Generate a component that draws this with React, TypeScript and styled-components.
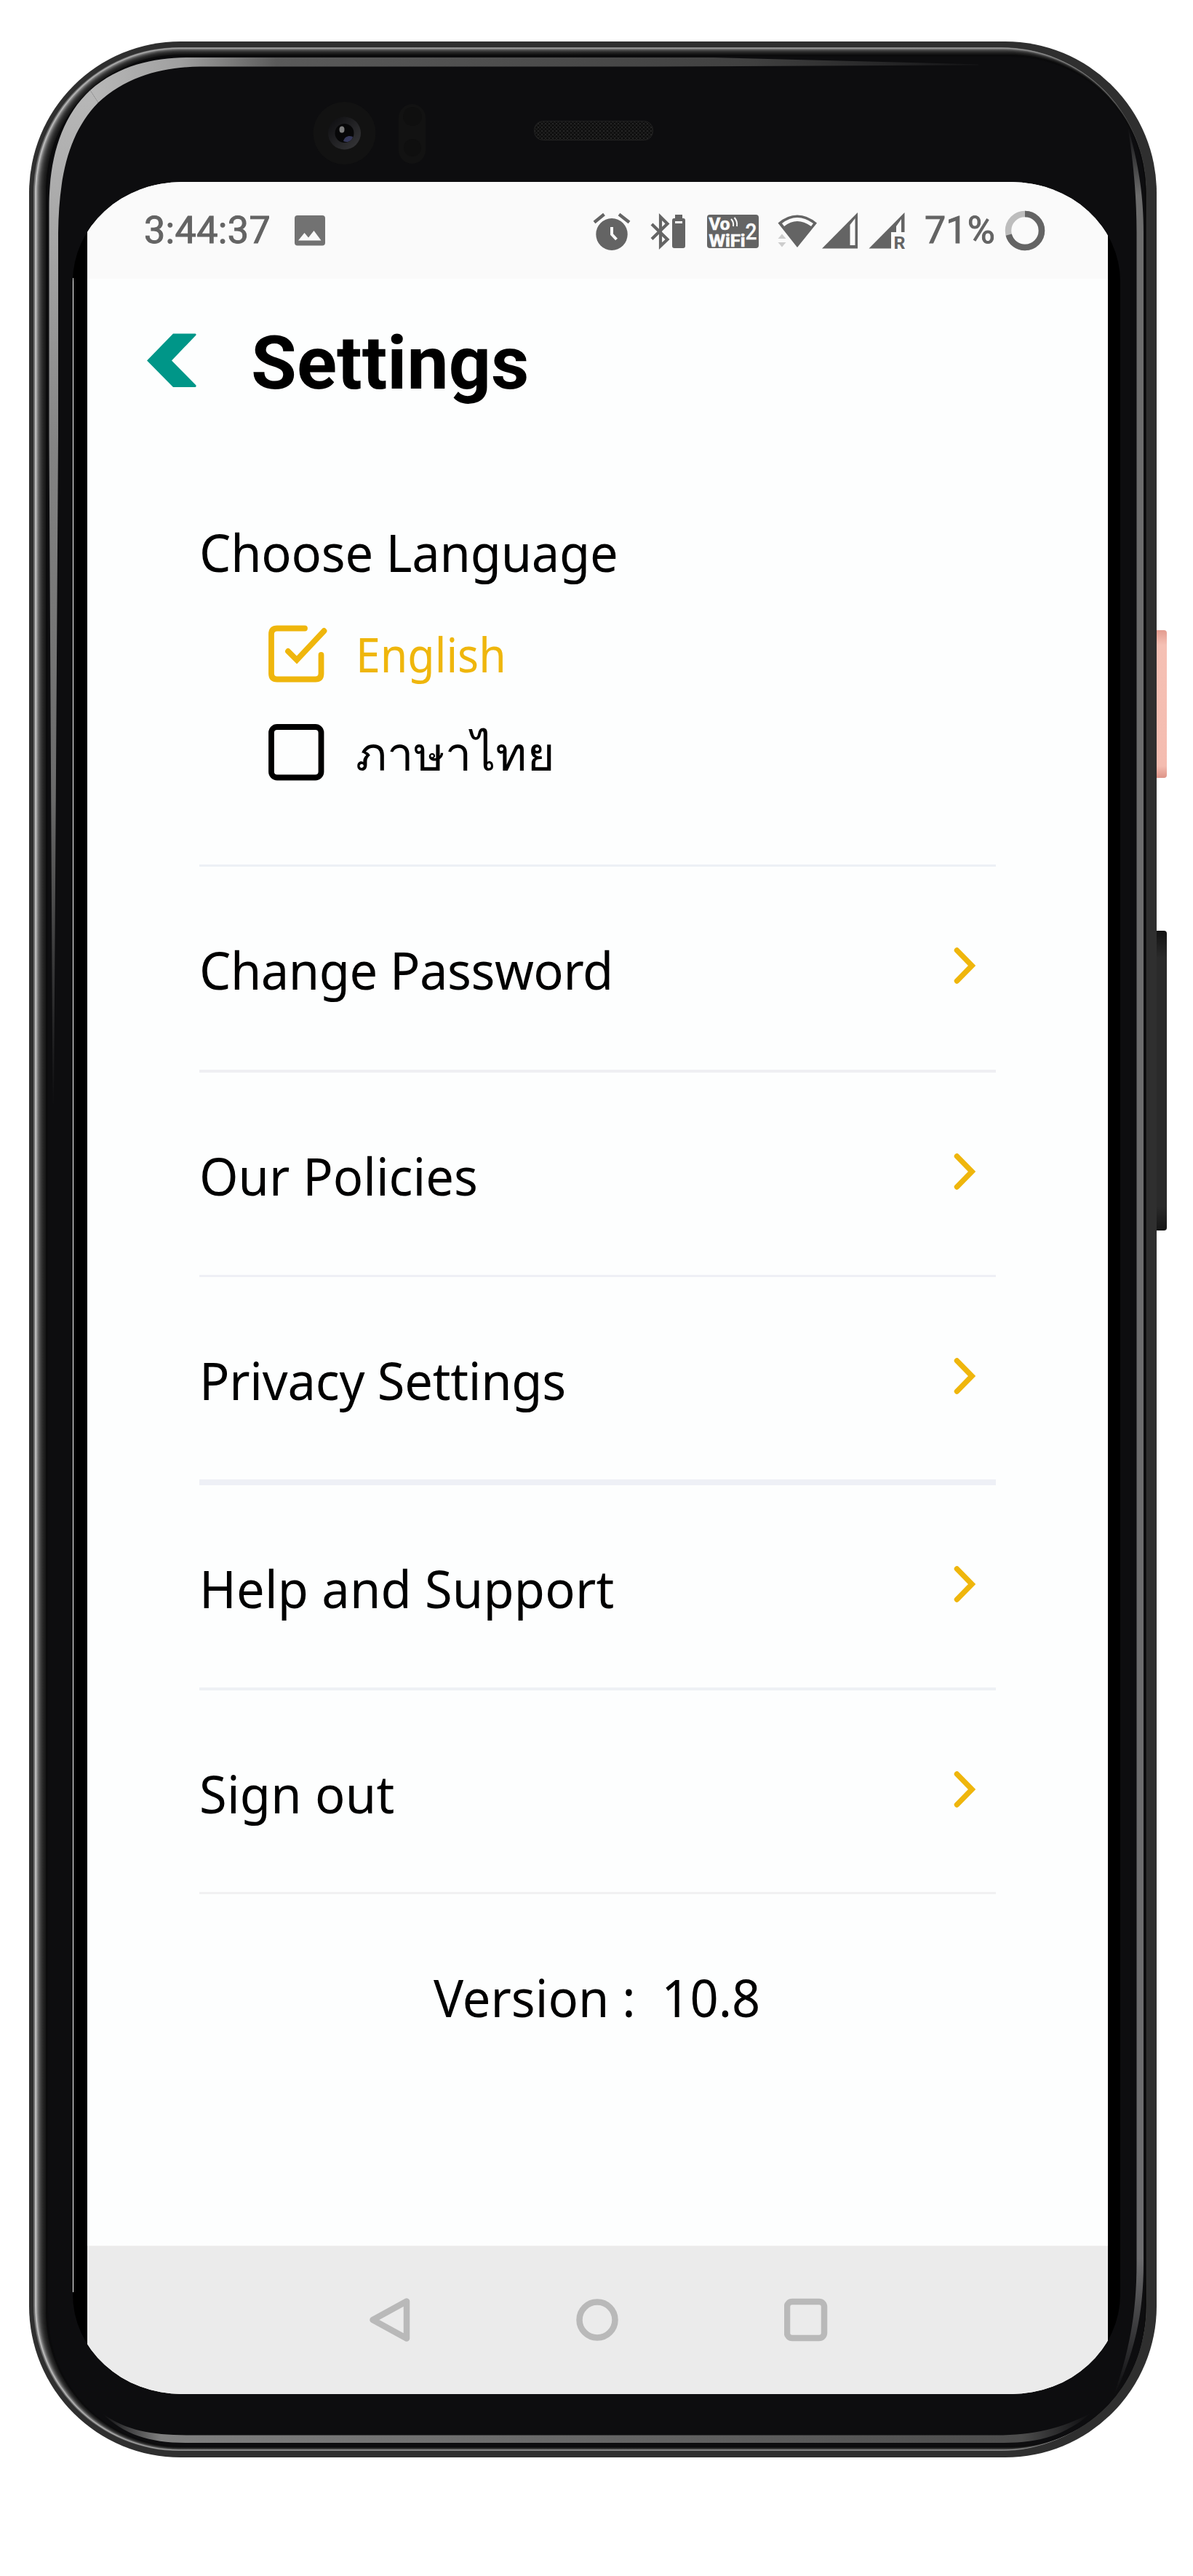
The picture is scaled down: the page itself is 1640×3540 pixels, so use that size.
import React from "react";
import styled, { createGlobalStyle } from "styled-components";

const UI_FONT = `"Noto Sans", Loma, "Open Sans", sans-serif`;
const SYSTEM_FONT = `Roboto, "Liberation Sans", sans-serif`;
const AMBER = "#efb60c";
const STATUS = "#646464";

const GlobalStyle = createGlobalStyle`
  * { box-sizing: border-box; }
  body { margin: 0; background: #ffffff; }
`;

const Stage = styled.main`
  width: 1640px;
  height: 3540px;
  padding: 57px 50px 0 40px;
  overflow: hidden;
`;

const Phone = styled.div`
  position: relative;
  width: 1550px;
  height: 3320px;
  padding: 193px 50px 87px 60px;
`;

const Chassis = styled.svg`
  position: absolute;
  left: -40px;
  top: -57px;
  width: 1640px;
  height: 3540px;
`;

const Glass = styled.div`
  position: relative;
  display: flex;
  width: 1440px;
  height: 3040px;
  padding: 0 17px 0 20px;
  overflow: hidden;
  border-radius: 150px / 137px;
  background: linear-gradient(#fff, #fff) no-repeat 0 132px / 1px 2768px, #000;
`;

const Screen = styled.div`
  display: flex;
  flex-direction: column;
  flex: 1;
  background: #fdfefe;
`;

const StatusBar = styled.header`
  display: flex;
  align-items: center;
  height: 133px;
  padding: 0 86px 0 78px;
  background: #fafafa;
  color: ${STATUS};
  font: 400 52px/60px ${SYSTEM_FONT};
`;

const Clock = styled.span<{ $tracking: number }>`
  width: 205px;
  letter-spacing: ${(p) => p.$tracking}px;
  white-space: nowrap;
  -webkit-text-stroke: 1px ${STATUS};
`;

const Battery = styled(Clock)`
  width: 135px;
  padding-left: 25px;
`;

const Glyph = styled.svg<{ $gap?: number; $push?: boolean }>`
  flex: none;
  overflow: visible;
  margin-left: ${(p) => (p.$push ? "auto" : `${p.$gap ?? 0}px`)};
`;

const TitleBar = styled.div`
  display: flex;
  align-items: flex-start;
  height: 330px;
  padding: 56px 0 0 82px;
`;

const BackIcon = styled.svg`
  margin-top: 19px;
  flex: none;
`;

const Title = styled.h1`
  margin: 0 0 0 75px;
  font: 700 102px/120px ${SYSTEM_FONT};
  letter-spacing: 0.1px;
  color: #000;
`;

const Content = styled.section`
  padding: 0 154px;
  flex: 1;
`;

const LanguageSection = styled.div`
  height: 478px;
  border-bottom: 3px solid #edf0f5;
`;

const Label = styled.span<{ $tracking: number }>`
  display: block;
  font: 400 72px/90px ${UI_FONT};
  letter-spacing: ${(p) => p.$tracking}px;
  white-space: pre;
  color: #000;
  transform: scaleX(0.953);
  transform-origin: left;
`;

const Options = styled.div`
  display: flex;
  flex-direction: column;
  gap: 45px;
  padding: 51px 0 0 91px;
`;

const Option = styled.label<{ $active?: boolean }>`
  display: flex;
  align-items: center;
  height: 90px;
  gap: 38px;
  color: ${(p) => (p.$active ? AMBER : "#000")};
`;

const OptionText = styled.span<{ $stretch: number }>`
  font: 400 65px/90px ${UI_FONT};
  white-space: nowrap;
  transform: scaleX(${(p) => p.$stretch});
  transform-origin: left;
`;

const Row = styled.div<{ $height: number; $rule: number; $tone: string }>`
  display: flex;
  justify-content: space-between;
  align-items: flex-start;
  height: ${(p) => p.$height}px;
  padding: 96px 27px 0 0;
  border-bottom: ${(p) => p.$rule}px solid ${(p) => p.$tone};
`;

const Chevron = styled.svg`
  margin-top: 15px;
  flex: none;
`;

const Version = styled.div`
  padding: 96px 0 0 322px;
`;

const NavBar = styled.nav`
  display: flex;
  align-items: center;
  height: 204px;
  padding: 0 0 2px 387px;
  border-top: 1px solid #f0f0f0;
  background: #ebebeb;
`;

const NavIcon = styled.svg<{ $gap?: number }>`
  margin-left: ${(p) => p.$gap ?? 0}px;
  flex: none;
`;

const rows = [
  { text: "Change Password", tracking: -0.5, height: 283, rule: 4, tone: "#efeff3" },
  { text: "Our Policies", tracking: 0, height: 281, rule: 3, tone: "#eeeff5" },
  { text: "Privacy Settings", tracking: -0.25, height: 286, rule: 8, tone: "#eef0f6" },
  { text: "Help and Support", tracking: 0.2, height: 282, rule: 4, tone: "#eef1f5" },
  { text: "Sign out", tracking: 0.25, height: 280, rule: 3, tone: "#f1f1f2" },
];

const RIM_STEPS = 14;

function PhoneChassis() {
  const rim = Array.from({ length: RIM_STEPS }, (_, i) => {
    const t = (i + 1) / RIM_STEPS;
    const x = 49 + 14 * t;
    const y = 66 + 9 * t;
    const right = 1575.5 - 1.5 * t;
    const bottom = 3367 - 4 * t;
    return { x, y, w: right - x, h: bottom - y, r: 198 - 12 * t };
  });
  return (
    <Chassis viewBox="0 0 1640 3540" aria-hidden="true">
      <defs>
        <linearGradient id="rim" x1="46" x2="1576" y1="0" y2="0" gradientUnits="userSpaceOnUse">
          <stop offset="0" stopColor="#bcbcbc" />
          <stop offset="0.12" stopColor="#a4a4a4" />
          <stop offset="0.88" stopColor="#969696" />
          <stop offset="0.97" stopColor="#777" />
          <stop offset="1" stopColor="#1c1c1c" />
        </linearGradient>
        <linearGradient id="topGlare" x1="125" x2="1340" y1="0" y2="0" gradientUnits="userSpaceOnUse">
          <stop offset="0" stopColor="#b8b8b8" />
          <stop offset="0.1" stopColor="#a0a0a0" />
          <stop offset="0.21" stopColor="#5a5a5a" />
          <stop offset="0.75" stopColor="#404040" />
          <stop offset="1" stopColor="#141416" />
        </linearGradient>
        <linearGradient id="leftGlare" x1="0" x2="0" y1="120" y2="1520" gradientUnits="userSpaceOnUse">
          <stop offset="0" stopColor="#b8b8b8" />
          <stop offset="0.15" stopColor="#a6a6a6" />
          <stop offset="0.35" stopColor="#848484" />
          <stop offset="0.7" stopColor="#6a6a6a" />
          <stop offset="1" stopColor="#0d0d0f" />
        </linearGradient>
        <linearGradient id="rightGlare" x1="0" x2="0" y1="175" y2="3290" gradientUnits="userSpaceOnUse">
          <stop offset="0" stopColor="#0d0d0f" />
          <stop offset="0.03" stopColor="#6c6c6c" />
          <stop offset="0.94" stopColor="#6c6c6e" />
          <stop offset="1" stopColor="#0d0d0f" />
        </linearGradient>
        <linearGradient id="bottomGlare" x1="140" x2="1500" y1="0" y2="0" gradientUnits="userSpaceOnUse">
          <stop offset="0" stopColor="#0d0d0f" />
          <stop offset="0.06" stopColor="#808080" />
          <stop offset="0.5" stopColor="#666" />
          <stop offset="0.93" stopColor="#4c4c4c" />
          <stop offset="1" stopColor="#0d0d0f" />
        </linearGradient>
        <linearGradient id="power" x1="0" x2="0" y1="0" y2="1">
          <stop offset="0" stopColor="#e39c90" />
          <stop offset="0.1" stopColor="#f5c0b4" />
          <stop offset="0.92" stopColor="#f4bcb0" />
          <stop offset="1" stopColor="#dd9387" />
        </linearGradient>
        <linearGradient id="volume" x1="0" x2="0" y1="0" y2="1">
          <stop offset="0" stopColor="#131313" />
          <stop offset="0.09" stopColor="#2a2a2a" />
          <stop offset="0.92" stopColor="#2a2a2a" />
          <stop offset="1" stopColor="#151515" />
        </linearGradient>
        <pattern id="mesh" width="5" height="5" patternUnits="userSpaceOnUse">
          <rect width="5" height="5" fill="#0e0e0e" />
          <path d="M0 0L5 5M5 0L0 5" stroke="#252525" strokeWidth="1" />
        </pattern>
        <linearGradient id="lens" x1="0" x2="1" y1="0" y2="1">
          <stop offset="0" stopColor="#0c0c0e" />
          <stop offset="1" stopColor="#38383b" />
        </linearGradient>
      </defs>
      <rect x="1570" y="866" width="34" height="203" rx="4" fill="url(#power)" />
      <rect x="1570" y="1279" width="34" height="412" rx="4" fill="url(#volume)" />
      <rect x="40" y="57" width="1550" height="3320" rx="208" fill="#2f2f2f" />
      <rect x="46" y="65" width="1530" height="3303" rx="200" fill="#6f6f6f" />
      <rect x="48" y="65.5" width="1528" height="3302" rx="199" fill="url(#rim)" />
      {rim.map((s, i) => (
        <rect key={i} x={s.x} y={s.y} width={s.w} height={s.h} rx={s.r} fill="#0b0b0c" fillOpacity={i === RIM_STEPS - 1 ? 1 : 0.17} />
      ))}
      <rect x="66" y="78" width="1508" height="3284" rx="184" fill="#0d0d0f" />
      <path d="M124 124C165 88 215 79 262 79H980L1345 88.5V89.5L900 91.5H275C225 92 175 104 135 141Z" fill="url(#topGlare)" />
      <path d="M124 124C83 162 67.500 220 67.500 285V600L72.500 1520H74L80 600V320C81 240 95 182 135 141Z" fill="url(#leftGlare)" />
      <path d="M1550 172C1559 205 1572 250 1572 320V3110C1572 3180 1560 3235 1528 3300C1552 3235 1562.500 3180 1562.500 3110V320C1562.500 265 1557 215 1550 172Z" fill="url(#rightGlare)" />
      <path d="M141 3317C175 3341 210 3346.500 262 3346.500H1370C1420 3346.500 1460 3337 1500 3316C1465 3346 1430 3357 1380 3357H255C205 3357 170 3345 141 3317Z" fill="url(#bottomGlare)" />
      <circle cx="473.500" cy="183" r="43" fill="#121212" />
      <circle cx="473.500" cy="183" r="22.500" fill="url(#lens)" />
      <circle cx="473.500" cy="183" r="13" fill="#070708" />
      <ellipse cx="470" cy="178" rx="3.500" ry="4.500" fill="#7c7c7c" />
      <path d="M472 194C474 187 480 186 485 188C484 193 478 197 472 194Z" fill="#35385a" />
      <rect x="548" y="143" width="37" height="82" rx="18.500" fill="#121212" />
      <circle cx="567" cy="160" r="13" fill="#0f0f0f" />
      <circle cx="567" cy="203" r="12" fill="#0f0f0f" />
      <rect x="734.500" y="166.500" width="163" height="26" rx="12" fill="url(#mesh)" stroke="#222" />
    </Chassis>
  );
}

function StatusIcons() {
  return (
    <>
      <Glyph $push width="55" height="56" viewBox="814 289 55 56" fill={STATUS}>
        <ellipse cx="841" cy="322" rx="21.700" ry="22" />
        <path d="M817 305.500L830.500 294.500M851 294.500L865 305.500" stroke={STATUS} strokeWidth="4.500" />
        <path d="M841 312V322L847.500 329" fill="none" stroke="#fafafa" strokeWidth="4" />
      </Glyph>
      <Glyph $gap={24} width="51" height="56" viewBox="893 289 51 56" fill={STATUS}>
        <path d="M896 308L917.500 329L908 338V298L917.500 307.500L896 328.500" fill="none" stroke={STATUS} strokeWidth="4.200" />
        <path d="M928 295H938V300H939.500Q942 300 942 303V338Q942 341 939 341H927Q924 341 924 338V303Q924 300 926.500 300H928Z" />
        <path d="M928 305.500H938" stroke="#fafafa" strokeWidth="3" />
      </Glyph>
      <Glyph $gap={28} width="71" height="56" viewBox="972 289 71 56">
        <rect x="972" y="295" width="71" height="46" rx="4" fill={STATUS} />
        <g fill="#fafafa" stroke="#fafafa" fontFamily="Roboto, sans-serif" fontWeight="700">
          <text x="974.500" y="315.500" fontSize="24" strokeWidth="0.700" textLength="29" lengthAdjust="spacingAndGlyphs">Vo</text>
          <text x="974.500" y="338.500" fontSize="24.500" strokeWidth="0.700" textLength="50" lengthAdjust="spacingAndGlyphs">WiFi</text>
          <text x="1024.500" y="329" fontSize="31" fontWeight="500" strokeWidth="0.300" textLength="16" lengthAdjust="spacingAndGlyphs">2</text>
        </g>
        <path d="M1005 301Q1009 305 1008 311M1009.500 299Q1014 304 1013 311" fill="none" stroke="#fafafa" strokeWidth="2" />
      </Glyph>
      <Glyph $gap={24} width="59" height="56" viewBox="1067 289 59 56" fill={STATUS}>
        <path d="M1096 340L1069.500 306.500Q1082 295.500 1096 295.500T1123 306.500Z" />
        <path d="M1076.500 309Q1086 301.500 1096 301.500T1116.500 309" fill="none" stroke="#fafafa" strokeWidth="5" />
        <path d="M1069.500 328H1080.500L1075 321.500ZM1069.500 333H1080.500L1075 339.500Z" fill="#cdcdcd" />
      </Glyph>
      <Glyph $gap={2} width="53" height="56" viewBox="1128 289 53 56" fill={STATUS}>
        <path d="M1130 341.500H1179V292Z" />
        <path d="M1168.500 309L1175.500 300V337H1168.500Z" fill="#fafafa" />
      </Glyph>
      <Glyph $gap={11} width="54" height="56" viewBox="1192 289 54 56" fill={STATUS}>
        <path d="M1194.500 341.500H1225V319H1232V311L1239 301V319H1243.500V292Z" />
        <text x="1228.500" y="341.500" fontSize="24" fontWeight="700" fontFamily="Roboto, sans-serif" textLength="16" lengthAdjust="spacingAndGlyphs">R</text>
      </Glyph>
    </>
  );
}

export default function App() {
  return (
    <Stage>
      <GlobalStyle />
      <Phone>
        <PhoneChassis />
        <Glass>
          <Screen>
            <StatusBar>
              <Clock $tracking={0.4}>3:44:37</Clock>
              <Glyph $gap={2} width="42" height="42" viewBox="405.500 297 42 42">
                <rect x="405.500" y="297" width="42" height="41.500" rx="4" fill="#727272" />
                <path d="M410.500 331.500L419 321L424.500 327.500L432 318L442 331.500Z" fill="#fafafa" />
              </Glyph>
              <StatusIcons />
              <Battery $tracking={0.1}>71%</Battery>
              <Glyph width="56" height="56" viewBox="1381 289 56 56" fill="none" strokeWidth="8.500">
                <circle cx="1409" cy="317" r="23" stroke="#bdbdbd" />
                <circle cx="1409" cy="317" r="23" stroke={STATUS} pathLength="100" strokeDasharray="71 29" transform="rotate(-90 1409 317)" />
              </Glyph>
            </StatusBar>
            <TitleBar>
              <BackIcon width="68" height="75" viewBox="0 0 68 75" fill="#009688">
                <path d="M36 0.500H66.500Q68 1 67.500 2.500L34 37.500L67.500 71.500Q68 73.500 66.500 74H36L0 37.500Z" />
              </BackIcon>
              <Title>Settings</Title>
            </TitleBar>
            <Content>
              <LanguageSection>
                <Label $tracking={-0.25}>Choose Language</Label>
                <Options>
                  <Option $active>
                    <svg width="86" height="90" viewBox="0 0 86 90" fill="none" stroke={AMBER} strokeWidth="7.800" strokeLinecap="round">
                      <path d="M54 9.500H16Q8 9.500 8 17.500V71.500Q8 79.500 16 79.500H68.500Q76.500 79.500 76.500 71.500V46" />
                      <path d="M31 41L43 53L80.500 13" strokeLinejoin="miter" />
                    </svg>
                    <OptionText $stretch={0.935}>English</OptionText>
                  </Option>
                  <Option>
                    <svg width="86" height="90" viewBox="0 0 86 90" fill="none" stroke="#000" strokeWidth="7.800">
                      <rect x="8" y="10" width="68.500" height="69.500" rx="8" />
                    </svg>
                    <OptionText $stretch={1.005} lang="th">ภาษาไทย</OptionText>
                  </Option>
                </Options>
              </LanguageSection>
              {rows.map((r) => (
                <Row key={r.text} $height={r.height} $rule={r.rule} $tone={r.tone}>
                  <Label $tracking={r.tracking}>{r.text}</Label>
                  <Chevron width="32" height="50" viewBox="0 0 32 50" fill="none" stroke={AMBER} strokeWidth="7.500" strokeLinecap="round">
                    <path d="M5.500 4L26 25L5.500 46" />
                  </Chevron>
                </Row>
              ))}
              <Version>
                <Label $tracking={0}>{"Version :  10.8"}</Label>
              </Version>
            </Content>
            <NavBar>
              <NavIcon width="60" height="64" viewBox="508 3157 60 64" fill="none" stroke="#b9b9b9" strokeWidth="8.500" strokeLinejoin="round">
                <path d="M560 3163.500V3214.500L513.500 3189Z" />
              </NavIcon>
              <NavIcon $gap={225} width="58" height="60" viewBox="792 3159 58 60" fill="none" stroke="#b9b9b9" strokeWidth="8.500">
                <circle cx="821" cy="3189" r="24.500" />
              </NavIcon>
              <NavIcon $gap={228} width="60" height="60" viewBox="1078 3159 60 60" fill="none" stroke="#b9b9b9" strokeWidth="8.500">
                <rect x="1082" y="3164" width="51" height="50" rx="7" />
              </NavIcon>
            </NavBar>
          </Screen>
        </Glass>
      </Phone>
    </Stage>
  );
}
